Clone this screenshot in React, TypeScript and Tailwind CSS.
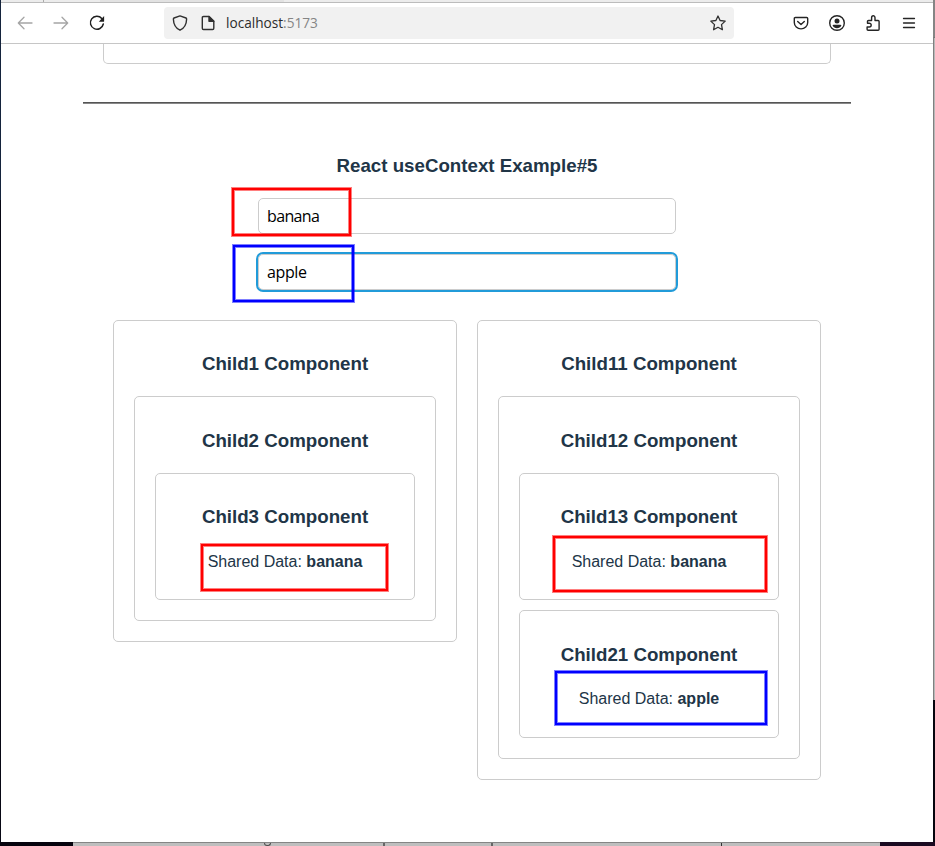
import type { ReactNode } from 'react';

function BrowserBar() {
  return (
    <header className="flex h-[42px] w-full items-center border-t border-b border-t-[#bcbcbc] border-b-[#c6c6c6] bg-white text-[#252525]">
      <svg className="ml-[16px] h-4 w-4" viewBox="0 0 16 16" fill="none" stroke="#a5a5a5" strokeWidth="1.3" strokeLinecap="round" strokeLinejoin="round">
        <path d="M15 8H1.5M7 2.3 1.3 8 7 13.7" />
      </svg>
      <svg className="ml-[20px] h-4 w-4" viewBox="0 0 16 16" fill="none" stroke="#a5a5a5" strokeWidth="1.3" strokeLinecap="round" strokeLinejoin="round">
        <path d="M1 8h13.5M9 2.3 14.7 8 9 13.7" />
      </svg>
      <svg className="ml-[20px] h-4 w-4" viewBox="0 0 16 16" fill="none">
        <path d="M12.8 3.4A6.5 6.5 0 1 0 14.3 9" stroke="#202020" strokeWidth="1.5" strokeLinecap="round" />
        <path d="M15.1 1v5.2a.5.5 0 0 1-.5.5H9.8z" fill="#202020" />
      </svg>
      <div className="ml-[59px] flex h-8 w-[570px] items-center rounded bg-[#f1f1f1]">
        <svg className="ml-2 h-4 w-4" viewBox="0 0 16 16" fill="none" stroke="#303030" strokeWidth="1.4" strokeLinejoin="round">
          <path d="M8 .9 14 3Q14.7 3.3 14.6 4.2C14.5 9 12.5 13 8 15.2 3.5 13 1.5 9 1.4 4.2Q1.3 3.3 2 3z" />
        </svg>
        <svg className="ml-3 h-4 w-4" viewBox="0 0 16 16" fill="none" stroke="#303030" strokeWidth="1.4" strokeLinejoin="round">
          <path d="M3.5 1.5H9l4.8 4.8v7q0 1.2-1.2 1.2H3.5q-1.2 0-1.2-1.2V2.7q0-1.2 1.2-1.2z" />
          <path d="M9 1.5v4.8h4.8z" fill="#303030" />
        </svg>
        <span className="ml-[10px] origin-left scale-x-[0.94] font-['Open_Sans',sans-serif] text-[14.5px] leading-5 text-[#2c2c2c]">
          localhost<span className="text-[#858585]">:5173</span>
        </span>
        <svg className="mr-2 ml-auto h-4 w-4" viewBox="0 0 16 16" fill="none" stroke="#303030" strokeWidth="1.3" strokeLinejoin="round">
          <path d="M8 1 10.1 5.5 15.2 6.1 11.5 9.6 12.4 14.7 8 12.3 3.6 14.7 4.5 9.6 .8 6.1 5.9 5.5z" />
        </svg>
      </div>
      <svg className="ml-[59px] h-4 w-4" viewBox="0 0 16 16" fill="none" stroke="#252525" strokeWidth="1.4" strokeLinecap="round" strokeLinejoin="round">
        <path d="M2.4 2.5h11.2q1.1 0 1.1 1.1V7.4a6.7 6.5 0 0 1-13.4 0V3.6q0-1.1 1.1-1.1z" />
        <path d="m4.7 6.5 3.3 3 3.3-3" />
      </svg>
      <svg className="ml-5 h-4 w-4 overflow-visible" viewBox="0 0 16 16" fill="none">
        <circle cx="8" cy="8" r="7.3" stroke="#252525" strokeWidth="1.4" />
        <circle cx="8" cy="6" r="2.5" fill="#252525" />
        <path d="M4.8 9.7h6.4q1.2 0 1.2.9C11.5 12.4 10 13.2 8 13.2s-3.5-.8-4.4-2.6q0-.9 1.2-.9z" fill="#252525" />
      </svg>
      <svg className="ml-5 h-4 w-4" viewBox="0 0 16 16" fill="none" stroke="#252525" strokeWidth="1.4" strokeLinejoin="round">
        <path d="M3.1 15.2h10q1 0 1-1V6.5q0-1-1-1H10V2.7a1.7 1.9 0 0 0-3.4 0v2.8H3.500q-1 0-1 1v1.7H4.3a1.9 1.9 0 0 1 0 3.8H2.1v2.2q0 1 1 1z" />
      </svg>
      <svg className="ml-5 h-4 w-4" viewBox="0 0 16 16" stroke="#252525" strokeWidth="1.3" strokeLinecap="round">
        <path d="M2.5 3.5h11M2.5 8h11M2.5 12.5h11" />
      </svg>
    </header>
  );
}

function Heading({ children, tall }: { children: ReactNode; tall?: boolean }) {
  return (
    <h3 className={`${tall ? 'h-14 pt-3' : 'h-[55px] pt-[11px]'} text-center text-[18.72px] leading-6 font-bold`}>
      {children}
    </h3>
  );
}

function Panel({ children }: { children: ReactNode }) {
  return <div className="rounded-[5px] border border-[#ccc] p-5">{children}</div>;
}

function Leaf({ title, value, tall }: { title: string; value: string; tall?: boolean }) {
  return (
    <div className={`${tall ? 'h-32' : 'h-[127px]'} w-[260px] rounded-[5px] border border-[#ccc] pt-5 text-center`}>
      <h3 className={`${tall ? 'pt-3' : 'pt-[11px]'} text-[18.72px] leading-6 font-bold`}>{title}</h3>
      <p className={`${tall ? 'mt-5' : 'mt-[21px]'} text-base leading-6`}>
        Shared Data: <b>{value}</b>
      </p>
    </div>
  );
}

function Mark({ className }: { className: string }) {
  return <div className={`pointer-events-none absolute border-2 ${className}`} />;
}

const RED = 'border-[#f00] shadow-[0_0_0_1px_#ff000080,inset_0_0_0_1px_#ff000080]';
const BLUE = 'border-[#00f] shadow-[0_0_0_1px_#0000ff80,inset_0_0_0_1px_#0000ff80]';

export default function App() {
  return (
    <div className="relative flex h-[846px] w-[935px] flex-col overflow-hidden bg-white font-['Liberation_Sans',Arial,sans-serif] text-[#213547]">
      <div className="flex h-[842px]">
        <div className="flex w-px flex-col">
          <div className="h-[200px] bg-[#14233c]" />
          <div className="flex-1 bg-[#080814]" />
        </div>
        <div className="flex w-[932px] flex-col">
          <div className="flex h-[2px] bg-[#ececec]">
            <div className="ml-[42px] w-px bg-[#aaa]" />
            <div className="ml-[56px] w-[184px] bg-[#e2e2e2]" />
          </div>
          <BrowserBar />
          <main className="flex flex-1 flex-col items-center bg-white">
            <div className="h-5 w-[728px] rounded-b-[5px] border border-t-0 border-[#ccc]" />
            <div className="mt-[38px] h-[2px] w-[768px] border-t border-b border-t-[#555] border-b-[#888]" />
            <h3 className="mt-[50px] text-[18.72px] leading-6 font-bold">React useContext Example#5</h3>
            <input
              readOnly
              value="banana"
              className="mt-5 h-9 w-[418px] rounded-[5px] border border-[#ccc] px-2 font-['Open_Sans',sans-serif] text-[16px] tracking-[-0.65px] text-black outline-none"
            />
            <input
              readOnly
              value="apple"
              className="mt-5 h-9 w-[418px] rounded-[5px] border border-[#ccc] px-2 font-['Open_Sans',sans-serif] text-[16px] tracking-[-0.4px] text-black outline-2 outline-[#219bd9]"
            />
            <div className="mt-[30px] flex items-start gap-5">
              <Panel>
                <Heading>Child1 Component</Heading>
                <Panel>
                  <Heading tall>Child2 Component</Heading>
                  <Leaf title="Child3 Component" value="banana" />
                </Panel>
              </Panel>
              <Panel>
                <Heading>Child11 Component</Heading>
                <Panel>
                  <Heading tall>Child12 Component</Heading>
                  <div className="flex flex-col gap-[10px]">
                    <Leaf title="Child13 Component" value="banana" />
                    <Leaf title="Child21 Component" value="apple" tall />
                  </div>
                </Panel>
              </Panel>
            </div>
          </main>
        </div>
        <div className="flex w-[2px] flex-col">
          <div className="h-[37px] bg-[#858585]" />
          <div className="h-[663px] border-t border-l border-t-[#777] border-l-[#808080] bg-[#b8b8b8]" />
          <div className="flex-1 bg-[#05050d]" />
        </div>
      </div>
      <footer className="flex h-1 bg-[#06040e]">
        <div className="ml-[73px] flex w-[807px] overflow-hidden border-t border-[#858585] bg-[#bebebe]">
          <div className="ml-[191px] h-[3px] w-[7px] rounded-b border-[1.5px] border-t-0 border-[#505050]" />
          <div className="ml-[112px] w-[2px] bg-[#666]" />
          <div className="ml-[106px] w-[2px] bg-[#666]" />
          <div className="ml-[228px] w-px bg-[#333]" />
        </div>
        <div className="flex-1 bg-[#1b0b22]" />
      </footer>
      <Mark className={`top-[188px] left-[232px] h-[48px] w-[119px] ${RED}`} />
      <Mark className={`top-[245px] left-[233px] h-[57px] w-[121px] ${BLUE}`} />
      <Mark className={`top-[544px] left-[201px] h-[47px] w-[187px] ${RED}`} />
      <Mark className={`top-[536px] left-[553px] h-[56px] w-[214px] ${RED}`} />
      <Mark className={`top-[671px] left-[555px] h-[54px] w-[212px] ${BLUE}`} />
    </div>
  );
}
